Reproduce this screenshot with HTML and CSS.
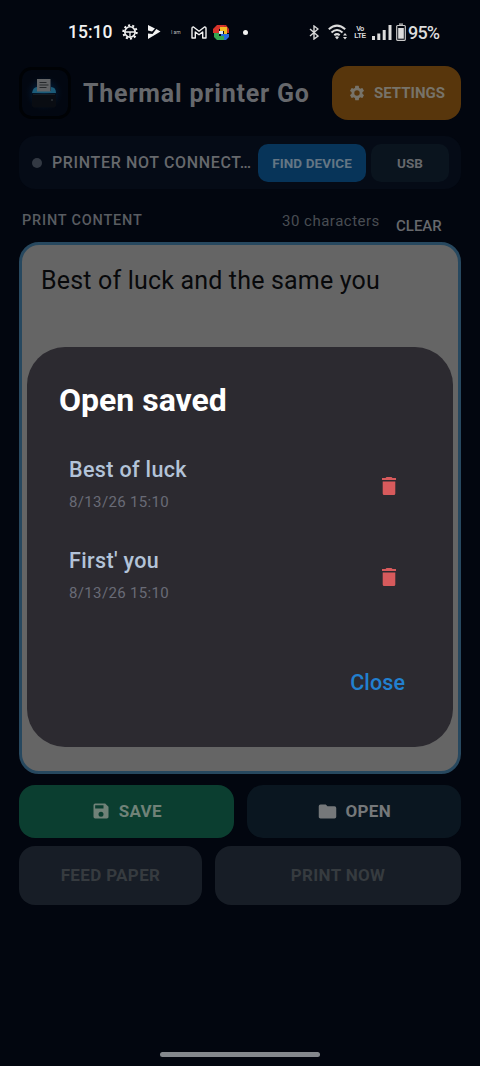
FILE: index.html
```html
<!DOCTYPE html>
<html lang="en">
<head>
<meta charset="utf-8">
<title>Thermal printer Go</title>
<link rel="stylesheet" href="styles.css">
</head>
<body>
<div class="screen">
  <div class="status">
    <span class="clock">15:10</span>
    <svg class="st-gear" width="16" height="16" viewBox="0 0 16 16" fill="none" stroke="#f2f2f2"><circle cx="8" cy="8" r="6.7" stroke-width="2" stroke-dasharray="2.1 2.1"/><circle cx="8" cy="8" r="5.2" stroke-width="1.6"/><path d="M3 8h10M8 8v5" stroke-width="1.3"/></svg>
    <svg class="st-play" width="14" height="16" viewBox="0 0 14 16" fill="#f2f2f2"><path d="M1 1l7 3.500-3 3L1 6.500zM9.300 5L13.500 7.500 1 15V9.500l4.500.500z"/></svg>
    <span class="tiny">I am</span>
    <svg class="st-mail" width="16" height="13" viewBox="0 0 16 13" fill="none" stroke="#f2f2f2" stroke-width="1.4" stroke-linejoin="round"><path d="M1 2.2Q1 .8 2.5 1L8 5.2 13.500 1Q15 .8 15 2.2V12h-3.300V6L8 8.800 4.300 6v6H1z"/></svg>
    <svg class="st-blocks" width="17" height="17" viewBox="0 0 17 17"><path fill="#d8342b" d="M4 1h7v4H6v4H0V5z"/><path fill="#f4bd25" d="M7 3h7v7h-3V7H7z"/><path fill="#286cdc" d="M8 10h8v3l-3 3H8z"/><path fill="#38a651" d="M1 9h5v3h5v4H4l-3-3z"/><path fill="#dce6ee" d="M6 7h4v3H6z"/><path fill="#c62c26" d="M11 1h2l3 4v4h-2V3h-3z"/></svg>
    <span class="st-dot"></span>
    <svg class="st-bt" width="10" height="15" viewBox="0 0 10 15" fill="none" stroke="#d8d8d8" stroke-width="1.4"><path d="M1 4l8 7-4 3V1l4 3-8 7"/></svg>
    <svg class="st-wifi" width="20" height="16" viewBox="0 0 20 16" fill="none" stroke="#dcdcdc" stroke-width="2"><path d="M.8 5.300q8.200-7.300 16.400 0M3.500 8.400q5.500-4.800 11 0M6.300 11.300q2.700-2.300 5.400 0"/><path fill="#dcdcdc" stroke="none" d="M7 13q2-1.500 4 0l-2 2.500zM15 11.500l2-2.500 2 2.500zM15 13h4l-2 2.500z"/></svg>
    <span class="volte"><span>Vo</span><span>LTE</span></span>
    <svg class="st-signal" width="20" height="15" viewBox="0 0 20 15" fill="#dcdcdc"><path d="M0 11h3v4H0zM5.300 8.500h3V15h-3zM10.700 5h3v10h-3zM16.500 0h3v15h-3z"/></svg>
    <svg class="st-batt" width="10" height="18" viewBox="0 0 10 18"><path d="M3 1.200h4M1.500 2.500h7q.8 0 .8 1v13q0 .8-.8.800h-7q-.8 0-.8-.8v-13q0-1 .8-1z" fill="none" stroke="#c8c8c8" stroke-width="1.200"/><path d="M2.200 5h5.600v10.700H2.200z" fill="#dcdcdc"/></svg>
    <span class="percent">95%</span>
  </div>

  <header class="header">
    <svg class="logo" width="52" height="52" viewBox="0 0 52 52">
      <defs><radialGradient id="glow"><stop offset="0" stop-color="#043461"/><stop offset=".5" stop-color="#03182f"/><stop offset="1" stop-color="#020711" stop-opacity="0"/></radialGradient></defs>
      <rect x="1.500" y="1.500" width="49" height="49" rx="11" fill="#020711" stroke="#000205" stroke-width="3"/>
      <ellipse cx="25" cy="26" rx="20" ry="19" fill="url(#glow)"/>
      <path d="M13 26q1-6 5-6v4h14v-4q5 0 5 6z" fill="#1b5b78"/>
      <path d="M18 12h13.500v12.500H18z" fill="#626466"/><path d="M20.500 15.500h7M20.500 18h9M20.500 20.500h7" stroke="#25282b"/>
      <rect x="13" y="26.500" width="24" height="14" rx="2" fill="#090c12"/><path d="M14 27.500h22" stroke="#161c23"/><circle cx="33" cy="33" r="1" fill="#2b3036"/>
    </svg>
    <h1 class="app-title">Thermal printer Go</h1>
    <button class="btn settings">
      <svg width="18" height="18" viewBox="0 0 24 24" fill="currentColor"><path d="M19.140 12.940c.04-.3.060-.61.060-.94s-.02-.64-.07-.94l2.030-1.580a.49.490 0 0 0 .12-.61l-1.920-3.320a.49.490 0 0 0-.59-.22l-2.390.96a7 7 0 0 0-1.620-.94l-.36-2.540a.48.480 0 0 0-.48-.41h-3.840a.47.470 0 0 0-.47.410l-.36 2.540c-.59.240-1.130.570-1.620.940l-2.390-.96a.47.470 0 0 0-.59.220L2.740 8.870a.47.470 0 0 0 .12.610l2.030 1.580c-.05.300-.09.630-.09.940s.02.640.070.940l-2.030 1.580a.49.490 0 0 0-.12.610l1.920 3.320c.12.220.370.290.590.220l2.390-.96c.5.380 1.030.700 1.620.940l.36 2.540c.05.240.240.410.480.410h3.840c.24 0 .44-.17.470-.41l.36-2.540a7 7 0 0 0 1.620-.94l2.390.96c.22.080.470 0 .59-.22l1.920-3.320a.47.470 0 0 0-.12-.61zM12 15.600a3.600 3.600 0 1 1 0-7.200 3.600 3.600 0 0 1 0 7.200z"/></svg>
      <span>SETTINGS</span>
    </button>
  </header>

  <section class="connection">
    <span class="state-dot"></span>
    <span class="state">PRINTER NOT CONNECT…</span>
    <button class="btn find">FIND DEVICE</button>
    <button class="btn usb">USB</button>
  </section>

  <div class="content-head">
    <span class="label">PRINT CONTENT</span>
    <span class="count">30 characters</span>
    <span class="clear">CLEAR</span>
  </div>

  <div class="editor">Best of luck and the same you</div>

  <div class="row file-row">
    <button class="btn save"><svg width="20" height="20" viewBox="0 0 24 24" fill="currentColor"><path d="M17 3H5a2 2 0 0 0-2 2v14a2 2 0 0 0 2 2h14c1.100 0 2-.9 2-2V7zm-5 16a3 3 0 1 1 0-6 3 3 0 0 1 0 6zm3-10H5V5h10z"/></svg><span>SAVE</span></button>
    <button class="btn open"><svg width="21" height="21" viewBox="0 0 24 24" fill="currentColor"><path d="M10 4H4a2 2 0 0 0-2 2v12c0 1.100.9 2 2 2h16a2 2 0 0 0 2-2V8a2 2 0 0 0-2-2h-8z"/></svg><span>OPEN</span></button>
  </div>
  <div class="row print-row">
    <button class="btn idle">FEED PAPER</button>
    <button class="btn idle">PRINT NOW</button>
  </div>
  <div class="home-bar"></div>

  <div class="dialog">
    <h2 class="dialog-title">Open saved</h2>
    <div class="item">
      <div><div class="item-name">Best of luck</div><div class="item-date">8/13/26 15:10</div></div>
      <svg class="trash" width="24" height="24" viewBox="0 0 24 24" fill="#d75a5c"><path d="M5.700 7.500V19.500q0 1.500 1.500 1.500h9.600q1.500 0 1.500-1.500V7.500zM19 4h-3.500l-1-1h-5l-1 1H5v2h14z"/></svg>
    </div>
    <div class="item">
      <div><div class="item-name">First' you</div><div class="item-date">8/13/26 15:10</div></div>
      <svg class="trash" width="24" height="24" viewBox="0 0 24 24" fill="#d75a5c"><path d="M5.700 7.500V19.500q0 1.500 1.500 1.500h9.600q1.500 0 1.500-1.500V7.500zM19 4h-3.500l-1-1h-5l-1 1H5v2h14z"/></svg>
    </div>
    <div class="close">Close</div>
  </div>
</div>
</body>
</html>
```

FILE: styles.css
```css
* { box-sizing: border-box; }
body { margin: 0; background: #02060f; font-family: Roboto, "Liberation Sans", sans-serif; }
.screen { position: relative; width: 480px; height: 1066px; overflow: hidden; padding: 0 19px; display: flex; flex-direction: column; }
h1, h2 { margin: 0; }

.status { height: 66px; margin: 0 -19px; padding: 0 0 2px 68px; display: flex; align-items: center; color: #f2f2f2; flex: none; }
.status svg { flex: none; }
.clock { width: 54px; font-size: 17.5px; font-weight: 500; }
.st-gear { margin-right: 9px; }
.st-play { margin-right: 10px; }
.tiny { width: 21px; font-size: 5px; color: #bbb; }
.st-mail { margin-right: 6px; margin-left: -1px; }
.st-blocks { margin-right: 13px; }
.st-dot { width: 5px; height: 5px; border-radius: 50%; background: #f2f2f2; margin-right: 61px; }
.st-bt { margin-right: 9px; }
.st-wifi { margin-right: 6px; }
.volte { width: 12px; margin-right: 6px; display: flex; flex-direction: column; align-items: center; font-family: "Liberation Sans", sans-serif; font-size: 7px; line-height: 7px; font-weight: 700; letter-spacing: -.4px; color: #dcdcdc; }
.st-signal { margin-right: 4px; }
.st-batt { margin-right: 2px; }
.percent { font-size: 18px; font-weight: 500; letter-spacing: -.8px; color: #dcdcdc; }

.btn { border: 0; padding: 0; font-family: inherit; font-weight: 700; color: #77797c; display: flex; align-items: center; justify-content: center; border-radius: 16px; white-space: nowrap; }

.header { height: 54px; display: flex; align-items: center; flex: none; }
.logo { flex: none; margin-right: 12px; }
.app-title { flex: 1; font-size: 25px; font-weight: 700; letter-spacing: .8px; color: #66686c; white-space: nowrap; }
.settings { width: 129px; height: 54px; background: #58360c; gap: 8px; font-size: 15px; color: #777369; }

.connection { height: 53px; margin-top: 16px; padding: 0 13px; border-radius: 16px; background: #050b16; display: flex; align-items: center; flex: none; }
.state-dot { width: 10px; height: 10px; border-radius: 50%; background: #333943; flex: none; }
.state { width: 216px; padding-left: 10px; font-size: 16px; font-weight: 500; letter-spacing: .65px; color: #66686c; white-space: nowrap; flex: none; }
.find { width: 108px; height: 38px; border-radius: 10px; background: #073459; font-size: 13.5px; letter-spacing: .1px; color: #647684; flex: none; }
.usb { width: 78px; height: 38px; margin-left: 5px; border-radius: 10px; background: #0a141e; font-size: 13.5px; color: #66686c; flex: none; }

.content-head { height: 53px; padding: 0 3px; display: flex; flex: none; }
.label { padding-top: 23px; flex: 1; font-size: 14.5px; font-weight: 500; letter-spacing: .8px; color: #595c61; }
.count { padding-top: 23px; width: 114px; font-size: 15px; letter-spacing: .5px; color: #494d53; white-space: nowrap; }
.clear { padding-top: 28px; width: 62px; font-size: 15px; font-weight: 500; color: #66686c; }

.editor { height: 532px; border: 3px solid #27485f; border-radius: 20px; background: #656565; padding: 19px 19px; font-size: 25px; line-height: 34px; letter-spacing: .18px; color: #08090b; white-space: nowrap; flex: none; }

.row { display: flex; flex: none; gap: 13px; }
.file-row { height: 53px; margin-top: 11px; }
.file-row .btn { flex: 1; padding-bottom: 1px; font-size: 17px; letter-spacing: .3px; gap: 8px; }
.save { background: #0b3e30; color: #708278; }
.open { background: #0a1620; color: #75787a; }
.print-row { height: 59px; margin-top: 8px; }
.idle { flex: none; padding-bottom: 2px; background: #171d26; color: #363b3f; font-size: 17px; letter-spacing: .35px; }
.idle:first-child { width: 183px; }
.idle:last-child { width: 246px; }
.home-bar { width: 160px; height: 5px; border-radius: 3px; background: #84888d; margin: auto auto 9px; flex: none; }

.dialog { position: absolute; left: 27px; top: 347px; width: 426px; height: 400px; border-radius: 38px; background: #2c2a30; padding: 34px 48px 0 32px; }
.dialog-title { font-size: 32px; line-height: 38px; font-weight: 700; color: #fff; margin-bottom: 21px; }
.item { height: 91px; padding: 16px 4px 0 10px; display: flex; justify-content: space-between; }
.item-name { font-size: 21.5px; line-height: 28px; font-weight: 500; letter-spacing: .35px; color: #b3c3d8; }
.item-date { margin-top: 8px; font-size: 15px; line-height: 20px; letter-spacing: .35px; color: #696b76; }
.trash { margin-top: 18px; }
.close { margin-top: 47px; text-align: right; font-size: 21.5px; line-height: 28px; font-weight: 500; letter-spacing: .1px; color: #2280cf; }
```
